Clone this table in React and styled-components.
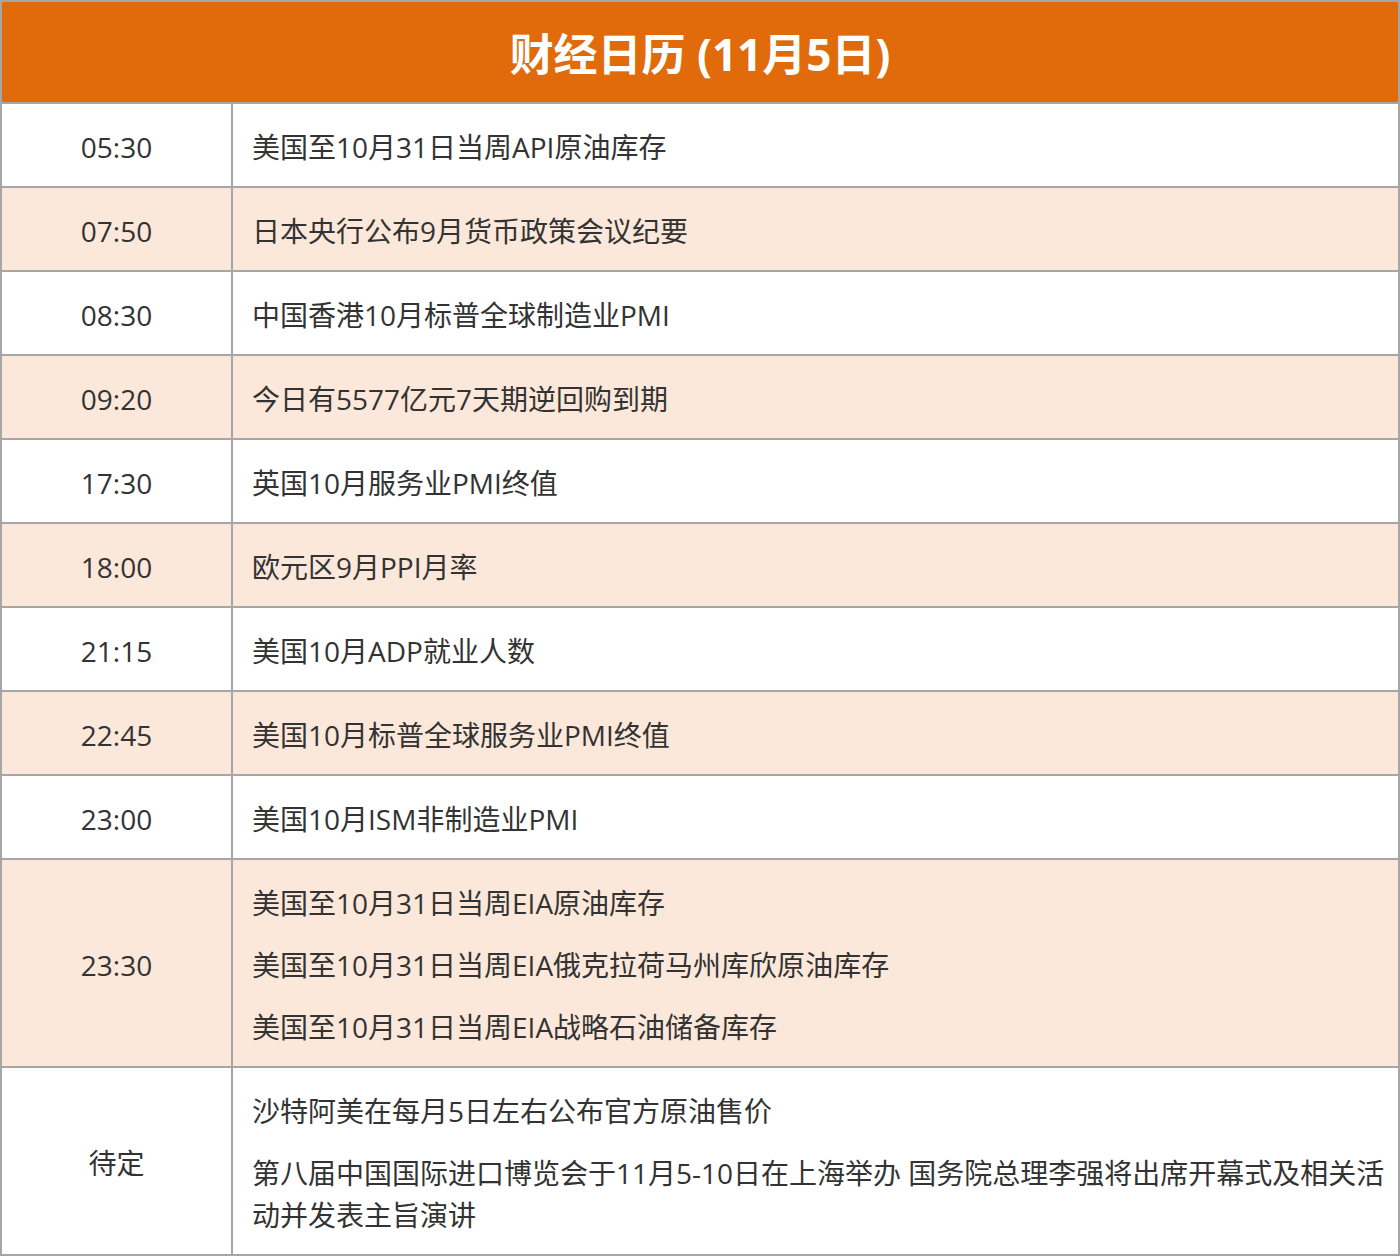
import React from "react";
import styled, { createGlobalStyle } from "styled-components";

const Global = createGlobalStyle`
  html, body { margin: 0; padding: 0; background: #fff; }
  body { font-family: "Open Sans", "Noto Sans CJK SC", sans-serif; color: #333; }
`;

const Table = styled.table`
  width: 1400px;
  border-collapse: collapse;
  table-layout: fixed;
  font-size: 28px;
  line-height: 42px;
`;

const TimeCol = styled.col`
  width: 231px;
`;

const HeaderCell = styled.th`
  background: #e16b0b;
  color: #fff;
  border: 2px solid #a6a6a6;
  height: 102px;
  padding: 4px 0 0;
  box-sizing: border-box;
  font-size: 44px;
  font-weight: 700;
  text-align: center;
  vertical-align: middle;
`;

const Row = styled.tr`
  background: ${(p) => (p.$shaded ? "#fce8da" : "#fff")};
`;

const TimeCell = styled.td`
  border: 2px solid #a6a6a6;
  padding: 22px 0 18px;
  text-align: center;
  vertical-align: middle;
`;

const EventCell = styled.td`
  border: 2px solid #a6a6a6;
  padding: 22px 6px 18px 19px;
  text-align: left;
  vertical-align: middle;
`;

const Para = styled.p`
  margin: 0;
  & + & { margin-top: 20px; }
`;

const rows = [
  ["05:30", ["美国至10月31日当周API原油库存"]],
  ["07:50", ["日本央行公布9月货币政策会议纪要"]],
  ["08:30", ["中国香港10月标普全球制造业PMI"]],
  ["09:20", ["今日有5577亿元7天期逆回购到期"]],
  ["17:30", ["英国10月服务业PMI终值"]],
  ["18:00", ["欧元区9月PPI月率"]],
  ["21:15", ["美国10月ADP就业人数"]],
  ["22:45", ["美国10月标普全球服务业PMI终值"]],
  ["23:00", ["美国10月ISM非制造业PMI"]],
  [
    "23:30",
    [
      "美国至10月31日当周EIA原油库存",
      "美国至10月31日当周EIA俄克拉荷马州库欣原油库存",
      "美国至10月31日当周EIA战略石油储备库存",
    ],
  ],
  [
    "待定",
    [
      "沙特阿美在每月5日左右公布官方原油售价",
      "第八届中国国际进口博览会于11月5-10日在上海举办 国务院总理李强将出席开幕式及相关活动并发表主旨演讲",
    ],
  ],
];

export default function App() {
  return (
    <>
      <Global />
      <Table>
        <colgroup>
          <TimeCol />
          <col />
        </colgroup>
        <thead>
          <tr>
            <HeaderCell colSpan={2}>财经日历 (11月5日)</HeaderCell>
          </tr>
        </thead>
        <tbody>
          {rows.map(([time, events], i) => (
            <Row key={time} $shaded={i % 2 === 1}>
              <TimeCell>{time}</TimeCell>
              <EventCell>
                {events.map((e) => (
                  <Para key={e}>{e}</Para>
                ))}
              </EventCell>
            </Row>
          ))}
        </tbody>
      </Table>
    </>
  );
}
